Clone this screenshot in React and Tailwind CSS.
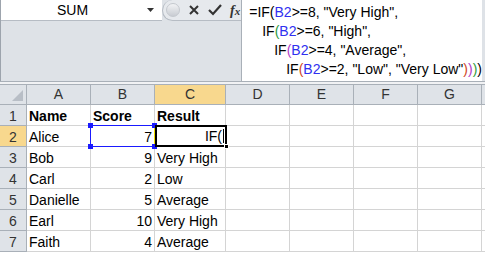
import React from "react";

const cols = [
  { key: "A", w: "w-[64px]" },
  { key: "B", w: "w-[64px]" },
  { key: "C", w: "w-[71px]" },
  { key: "D", w: "w-[64px]" },
  { key: "E", w: "w-[64px]" },
  { key: "F", w: "w-[64px]" },
  { key: "G", w: "w-[64px]" },
];

const rows = [
  ["Name", "Score", "Result"],
  ["Alice", "7", ""],
  ["Bob", "9", "Very High"],
  ["Carl", "2", "Low"],
  ["Danielle", "5", "Average"],
  ["Earl", "10", "Very High"],
  ["Faith", "4", "Average"],
];

const B = () => <span className="text-[#3030f0]">B2</span>;

const FormulaText = () => (
  <div className="flex flex-col pt-[3px] text-[14px] leading-[19px] text-black whitespace-pre">
    <div className="pl-[7px]">
      =IF(<B />&gt;=8, "Very High",
    </div>
    <div className="pl-[20px]">
      IF<span className="text-[#2e9a3c]">(</span>
      <B />&gt;=6, "High",
    </div>
    <div className="pl-[32px]">
      IF<span className="text-[#b03cc8]">(</span>
      <B />&gt;=4, "Average",
    </div>
    <div className="pl-[44px]">
      IF<span className="text-[#d0461e]">(</span>
      <B />&gt;=2, "Low", "Very Low"
      <span className="text-[#d0461e]">)</span>
      <span className="text-[#b03cc8]">)</span>
      <span className="text-[#2e9a3c]">)</span>)
    </div>
  </div>
);

const FormulaBar = () => (
  <div className="flex h-[82px] border-b border-[#a9b0b8]">
    <div className="flex flex-col w-[247px] bg-[#dee2e7] border-l border-[#9da4ad]">
      <div className="flex h-[21px] items-center">
        <div className="flex w-[161px] h-full items-center bg-white pl-[56px] pr-[7px] border-b border-[#b6bcc4]">
          <span className="text-[14px] text-black">SUM</span>
          <svg className="ml-auto" width="8" height="5" viewBox="0 0 8 5">
            <path d="M0 0h7L3.5 4z" fill="#333" />
          </svg>
        </div>
        <div className="flex flex-1 h-full items-center gap-[8px] rounded-l-full border-l border-b border-[#b6bcc4] bg-[#e6e9ed] pl-[3px]">
          <div className="w-[14px] h-[14px] rounded-full bg-gradient-to-b from-[#f2f3f5] to-[#c8ccd2] border border-[#c4c8ce]" />
          <svg width="12" height="12" viewBox="0 0 12 12">
            <path d="M2 2l8 8M10 2l-8 8" stroke="#333" strokeWidth="2" />
          </svg>
          <svg width="14" height="12" viewBox="0 0 14 12">
            <path d="M1 6l4 4 8-9" stroke="#333" strokeWidth="2.2" fill="none" />
          </svg>
          <span className="text-[14px] italic font-bold text-[#333] [font-family:'Liberation_Serif',serif]">
            f<span className="text-[11px]">x</span>
          </span>
        </div>
      </div>
    </div>
    <div className="flex-1 bg-white border-l border-[#a9b0b8] border-r-[3px] border-r-[#dee2e7]">
      <FormulaText />
    </div>
  </div>
);

const Header = () => (
  <div className="flex h-[21px] border-t border-[#a9b0b8] bg-[#dfe3e8]">
    <div className="relative w-[27px] border-r border-b border-[#a9b0b8]">
      <svg className="absolute right-[3px] bottom-[3px]" width="11" height="11" viewBox="0 0 11 11">
        <path d="M11 0v11H0z" fill="#b8bec6" />
      </svg>
    </div>
    {cols.map((c) => (
      <div
        key={c.key}
        className={`${c.w} flex items-end justify-center pb-[2px] leading-[16px] border-r border-b border-[#a9b0b8] text-[14px] ${
          c.key === "C" ? "bg-[#f8d88e] text-[#333]" : "text-[#333]"
        }`}
      >
        {c.key}
      </div>
    ))}
    <div className="flex-1 border-b border-[#a9b0b8]" />
  </div>
);

const Row = ({ n, cells }) => (
  <div className="flex h-[21px]">
    <div
      className={`w-[27px] flex items-end justify-center pb-[1px] leading-[16px] border-r border-b border-[#a9b0b8] text-[14px] text-[#333] ${
        n === 2 ? "bg-[#f8d88e]" : "bg-[#dfe3e8]"
      }`}
    >
      {n}
    </div>
    {cols.map((c, i) => {
      const v = cells[i] || "";
      const num = n > 1 && i === 1;
      return (
        <div
          key={c.key}
          className={`${c.w} flex items-end pb-[1px] px-[2px] leading-[16px] border-r border-b border-[#d4d4d4] text-[14px] text-black whitespace-nowrap ${
            num ? "justify-end" : ""
          } ${n === 1 ? "font-bold" : ""}`}
        >
          {v}
        </div>
      );
    })}
    <div className="flex-1 border-b border-[#d4d4d4]" />
  </div>
);

export default function App() {
  return (
    <div className="w-[485px] h-[254px] overflow-hidden bg-white [font-family:'Liberation_Sans',Arial,sans-serif]">
      <FormulaBar />
      <div className="h-[2px] bg-[#f1f2f4]" />
      <div className="relative">
        <Header />
        {rows.map((r, i) => (
          <Row key={i} n={i + 1} cells={r} />
        ))}
        {/* B2 reference highlight */}
        <div className="absolute left-[90px] top-[41px] w-[65px] h-[22px] border border-[#1a1aff] border-r-[#f0e000]">
          <div className="absolute -left-[3px] -top-[3px] w-[5px] h-[5px] bg-[#1a1aff]" />
          <div className="absolute -right-[3px] -top-[3px] w-[5px] h-[5px] bg-[#1a1aff]" />
          <div className="absolute -left-[3px] -bottom-[3px] w-[5px] h-[5px] bg-[#1a1aff]" />
          <div className="absolute -right-[3px] -bottom-[3px] w-[5px] h-[5px] bg-[#1a1aff]" />
        </div>
        {/* active cell C2 in edit mode */}
        <div className="absolute left-[155px] top-[41px] w-[72px] h-[22px] border-2 border-black bg-white flex items-end justify-end pb-[1px] pr-[1px] leading-[16px] text-[14px] text-black">
          IF(<span className="inline-block w-[1px] h-[14px] bg-black mb-[1px] ml-[1px]" />
          <div className="absolute -right-[4px] -bottom-[4px] w-[5px] h-[5px] bg-black border border-white" />
        </div>
      </div>
    </div>
  );
}
